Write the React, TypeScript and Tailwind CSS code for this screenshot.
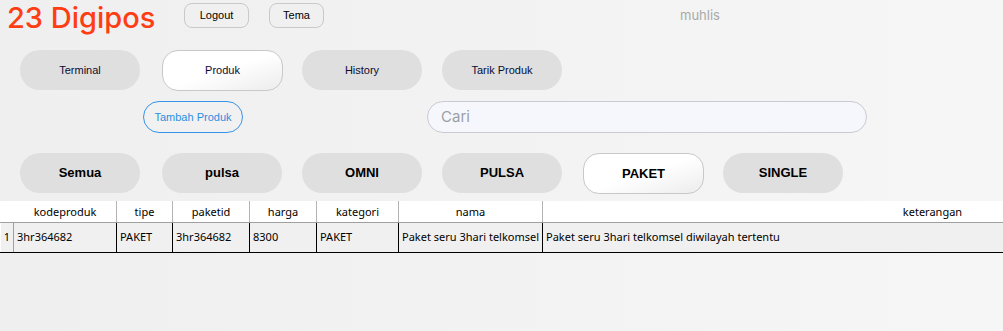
import React from "react";

const navs = ["Terminal", "Produk", "History", "Tarik Produk"];
const cats = ["Semua", "pulsa", "OMNI", "PULSA", "PAKET", "SINGLE"];

const cols = [
  { key: "kodeproduk", w: "w-[103px]" },
  { key: "tipe", w: "w-[56px]" },
  { key: "paketid", w: "w-[77px]" },
  { key: "harga", w: "w-[67px]" },
  { key: "kategori", w: "w-[82px]" },
  { key: "nama", w: "w-[144px]" },
  { key: "keterangan", w: "w-[780px]" },
];

const row = {
  kodeproduk: "3hr364682",
  tipe: "PAKET",
  paketid: "3hr364682",
  harga: "8300",
  kategori: "PAKET",
  nama: "Paket seru 3hari telkomsel",
  keterangan: "Paket seru 3hari telkomsel diwilayah tertentu",
};

const App = () => {
  return (
    <div className="w-[1003px] h-[331px] overflow-hidden bg-gradient-to-r from-[#efefef] to-[#f6f6f6] font-['Liberation_Sans',sans-serif]">
      {/* top bar */}
      <div className="flex items-start h-[50px]">
        <div className="ml-[7px] w-[177px] text-[29px] leading-[35px] font-medium text-[#ff3d12] font-['Inter',sans-serif] whitespace-nowrap">
          23 Digipos
        </div>
        <button className="mt-[3px] w-[65px] h-[25px] rounded-[8px] border border-[#c9c9c9] bg-[#f0f0f0] text-[11px] text-black">
          Logout
        </button>
        <button className="mt-[3px] ml-[20px] w-[55px] h-[25px] rounded-[8px] border border-[#c9c9c9] bg-[#f0f0f0] text-[11px] text-black">
          Tema
        </button>
        <div className="ml-[356px] mt-[6px] text-[13px] text-[#a9a9a9] font-['Inter',sans-serif]">
          muhlis
        </div>
      </div>

      {/* menu */}
      <div className="flex items-start pl-[20px] h-[51px]">
        {navs.map((n, i) =>
          n === "Produk" ? (
            <button
              key={n}
              className="ml-[22px] w-[121px] h-[41px] rounded-[16px] border border-[#c8c8c8] bg-gradient-to-br from-white via-white to-[#ececec] text-[11px] text-[#0b0b33]"
            >
              {n}
            </button>
          ) : (
            <button
              key={n}
              className={`${i === 0 ? "" : i === 2 ? "ml-[19px]" : "ml-[20px]"} w-[120px] h-[40px] rounded-[20px] bg-[#dfdfdf] text-[11px] text-[#0b0b33]`}
            >
              {n}
            </button>
          )
        )}
      </div>

      {/* actions */}
      <div className="flex items-start h-[52px]">
        <button className="ml-[143px] w-[100px] h-[32px] rounded-[16px] border border-[#3794e8] bg-[#f1f1f1] text-[11px] text-[#2b8fe0]">
          Tambah Produk
        </button>
        <div className="ml-[184px] w-[440px] h-[32px] rounded-[16px] border border-[#cacad2] bg-[#f6f7fc] flex items-center pl-[13px] text-[15px] text-[#9aa0a8] font-['Inter',sans-serif]">
          Cari
        </div>
      </div>

      {/* categories */}
      <div className="flex items-start pl-[20px] h-[48px]">
        {cats.map((c, i) =>
          c === "PAKET" ? (
            <button
              key={c}
              className="ml-[21px] w-[121px] h-[41px] rounded-[16px] border border-[#c8c8c8] bg-gradient-to-br from-white via-white to-[#ececec] text-[13px] font-bold text-black"
            >
              {c}
            </button>
          ) : (
            <button
              key={c}
              className={`${i === 0 ? "" : i === 1 ? "ml-[22px]" : i === 5 ? "ml-[19px]" : "ml-[20px]"} w-[120px] h-[40px] rounded-[20px] bg-[#dfdfdf] text-[13px] font-bold text-black`}
            >
              {c}
            </button>
          )
        )}
      </div>

      {/* table */}
      <div className="text-[11px] text-black font-['Noto_Sans',sans-serif]">
        <div className="flex h-[22px] bg-white border-b border-[#a0a0a0]">
          <div className="w-[14px] shrink-0" />
          {cols.map((c) => (
            <div
              key={c.key}
              className={`${c.w} shrink-0 flex items-center justify-center border-r border-[#b4b4b4] leading-none`}
            >
              {c.key}
            </div>
          ))}
        </div>
        <div className="flex h-[30px] bg-[#f0f0f0] border-b border-black">
          <div className="w-[14px] shrink-0 flex items-center justify-center border-r border-[#a0a0a0] border-l border-l-white">
            1
          </div>
          {cols.map((c) => (
            <div
              key={c.key}
              className={`${c.w} shrink-0 flex items-center pl-[3px] border-r border-black whitespace-nowrap overflow-hidden`}
            >
              {row[c.key as keyof typeof row]}
            </div>
          ))}
        </div>
      </div>
    </div>
  );
};

export default App;
